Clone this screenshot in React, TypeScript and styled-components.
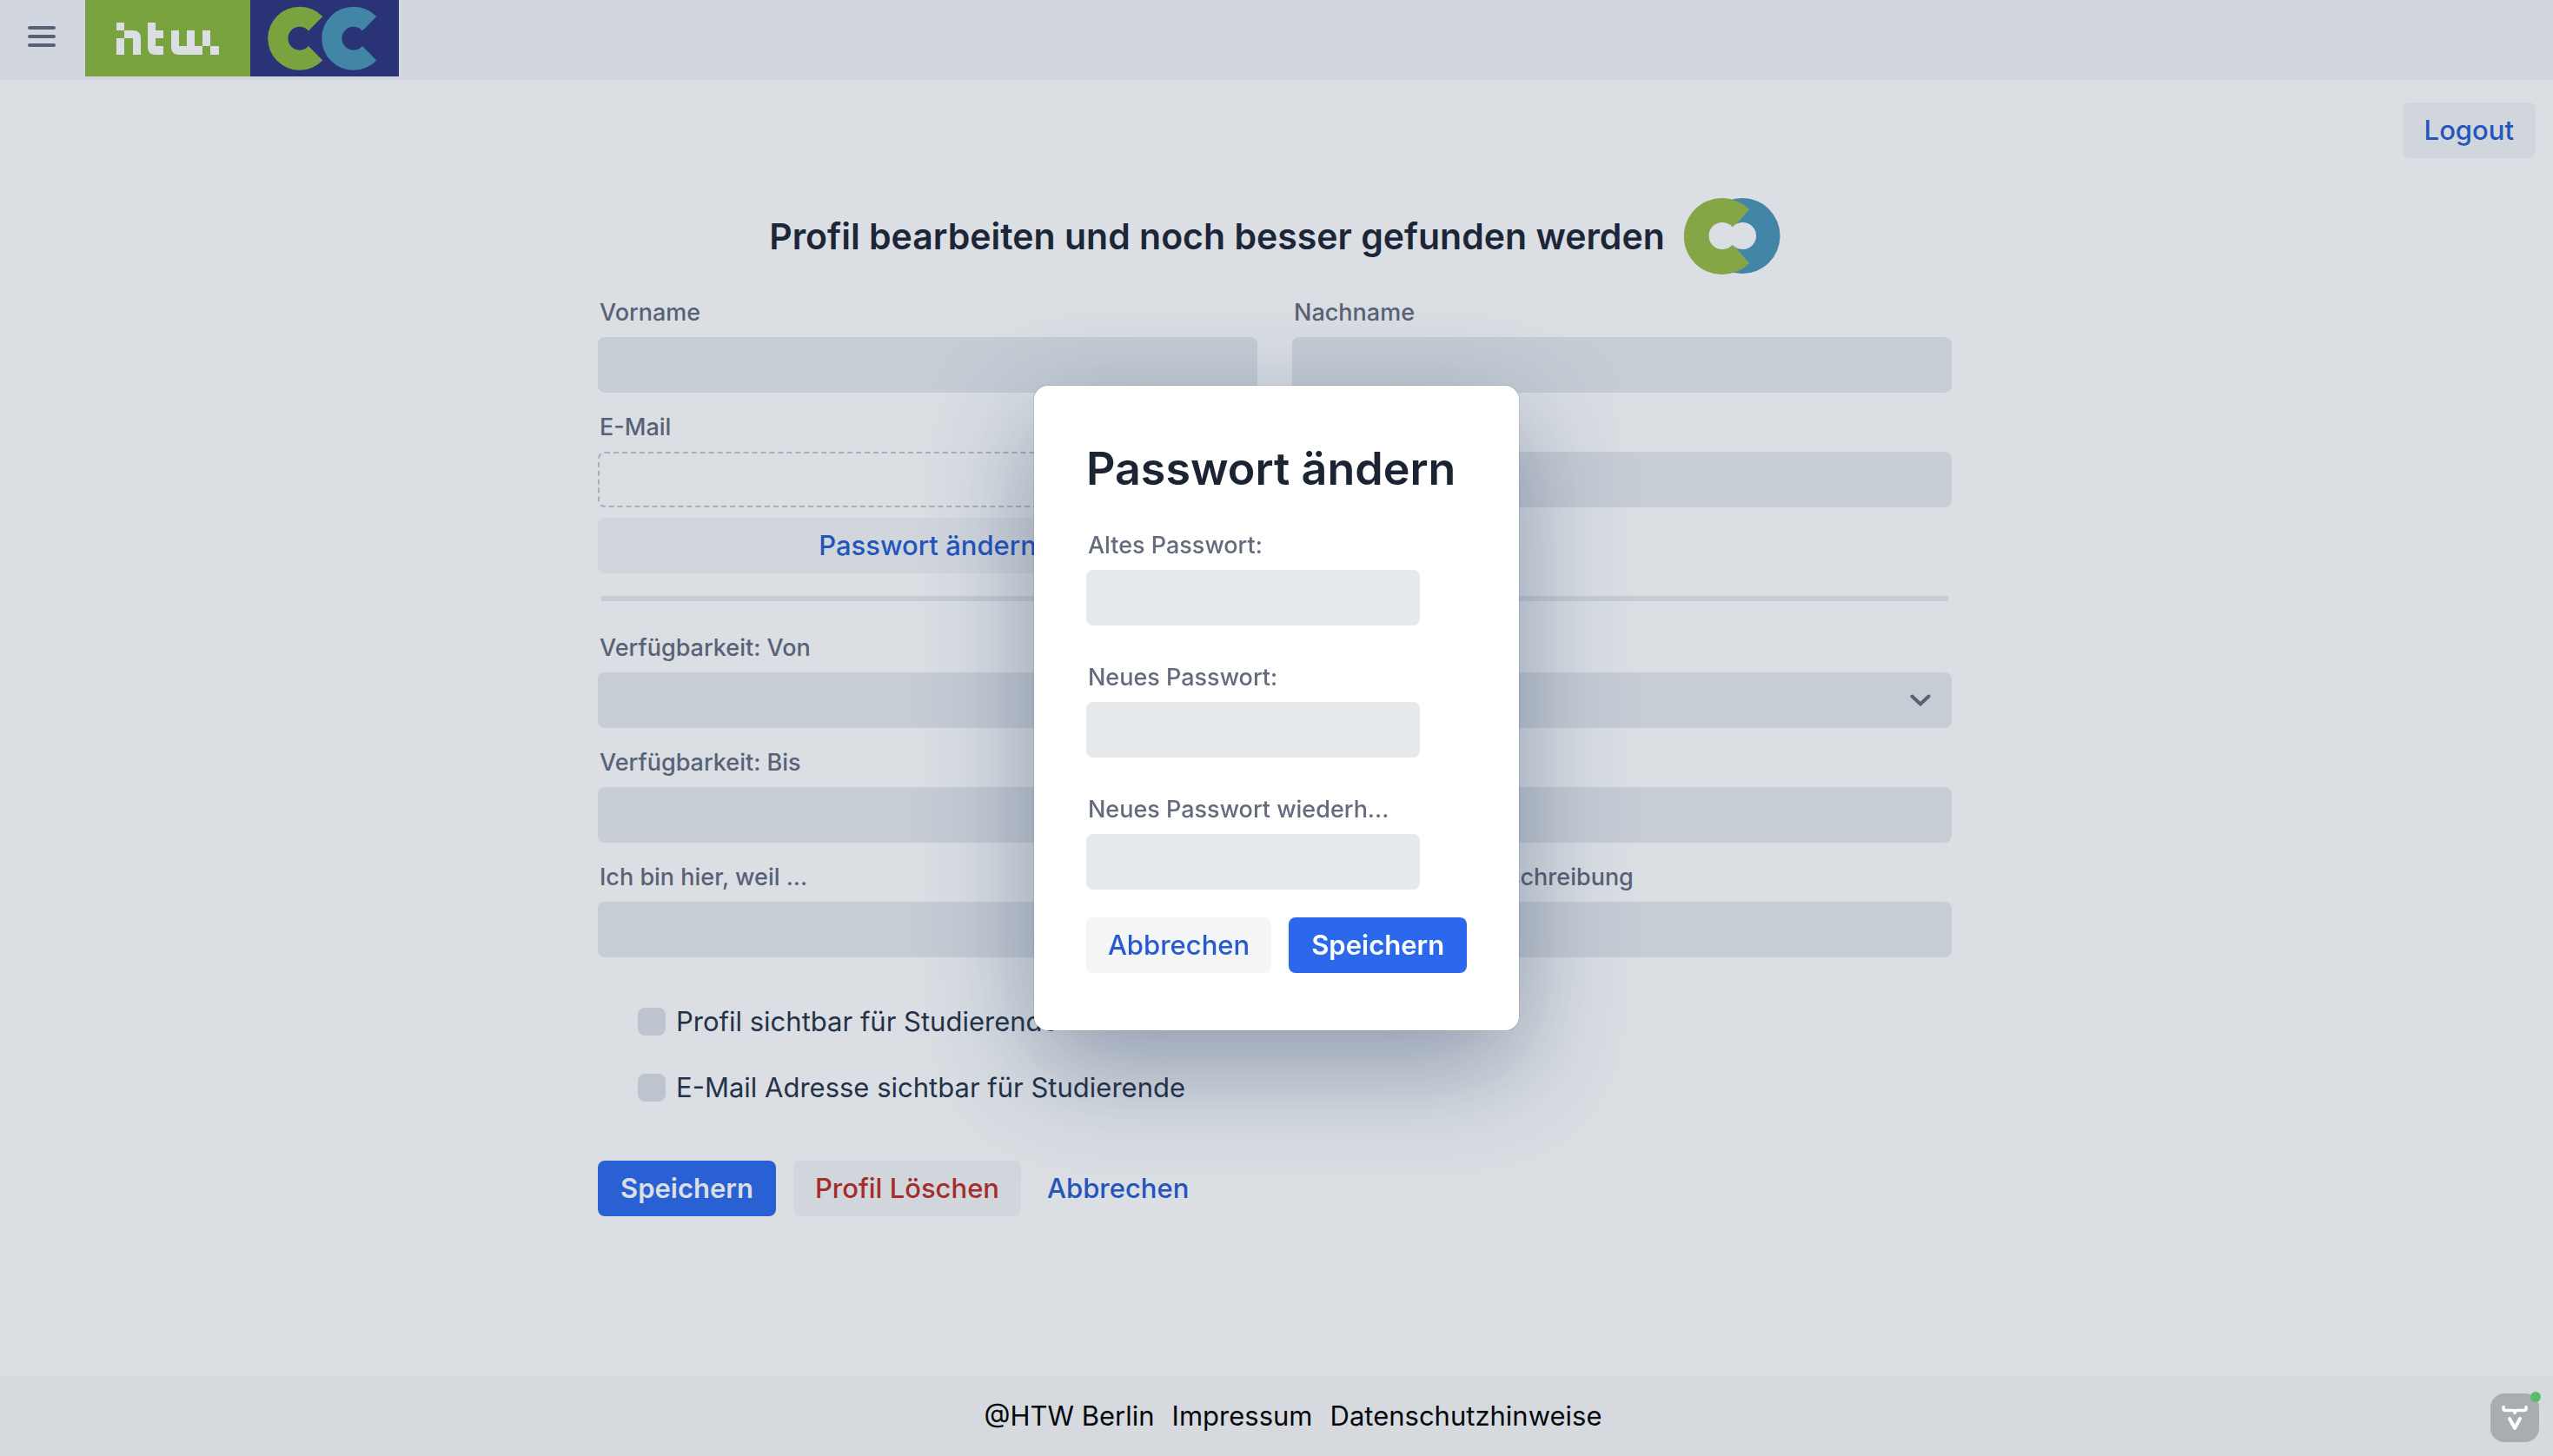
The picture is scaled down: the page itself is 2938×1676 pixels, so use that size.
import React, { useId } from "react";
import styled, { createGlobalStyle, css } from "styled-components";

const color = {
  header: "#1b2433",
  body: "#263246",
  secondary: "#646b7c",
  primary: "#2c68ec",
  primaryText: "#265bd0",
  errorText: "#bf2b1f",
  contrast5: "#f4f5f7",
  contrast10: "#e6eaed",
  green: "#8ab83a",
  lime: "#98bb44",
  teal: "#4b94b7",
  navy: "#2b337d",
};

const GlobalStyle = createGlobalStyle`
  *, *::before, *::after { box-sizing: border-box; }
  body {
    margin: 0;
    background: #fff;
    color: ${color.body};
    font-family: Inter, Roboto, "Liberation Sans", sans-serif;
    font-size: 31px;
    line-height: 48px;
  }
  h1, h2 { margin: 0; color: ${color.header}; font-weight: 600; white-space: nowrap; }
  button, input, select { font: inherit; }
`;

const Page = styled.div`
  min-height: 100vh;
  display: flex;
  flex-direction: column;
`;

const Navbar = styled.header`
  display: flex;
  align-items: flex-start;
  height: 92px;
  background: #f5f6f9;
`;

const MenuToggle = styled.button`
  display: flex;
  align-items: center;
  justify-content: center;
  width: 98px;
  height: 84px;
  padding: 0 2px 0 0;
  border: 0;
  background: none;
  color: ${color.secondary};
`;

const Main = styled.main`
  flex: 1;
  display: flex;
  flex-direction: column;
  padding: 26px 20px 0 16px;
`;

const Button = styled.button<{ $kind?: "plain" | "primary" | "danger" | "link" }>`
  height: 64px;
  padding: 0 25px;
  border: 0;
  border-radius: 8px;
  font-weight: 500;
  white-space: nowrap;
  background: ${color.contrast5};
  color: ${color.primaryText};
  ${({ $kind }) =>
    $kind === "primary" &&
    css`
      padding: 0 26px;
      background: ${color.primary};
      color: #fff;
      font-weight: 600;
    `}
  ${({ $kind }) => $kind === "danger" && css`color: ${color.errorText};`}
  ${({ $kind }) =>
    $kind === "link" &&
    css`
      background: none;
      padding: 0 10px;
    `}
`;

const LogoutButton = styled(Button)`
  align-self: flex-end;
`;

const TitleRow = styled.div`
  display: flex;
  align-items: center;
  justify-content: center;
  gap: 22px;
  margin: 46px 0 4px;
`;

const PageTitle = styled.h1`
  font-size: 41px;
  line-height: 56px;
`;

const ProfileForm = styled.form`
  width: 100%;
  max-width: 1558px;
  margin: 0 auto;
`;

const Columns = styled.div`
  display: grid;
  grid-template-columns: 1fr 1fr;
  column-gap: 40px;
`;

const FieldBox = styled.div`
  display: flex;
  flex-direction: column;
  min-width: 0;
`;

const FieldLabel = styled.label`
  height: 68px;
  padding: 24px 26px 12px 2px;
  overflow: hidden;
  text-overflow: ellipsis;
  white-space: nowrap;
  color: ${color.secondary};
  font-size: 27px;
  line-height: 32px;
  font-weight: 500;
`;

const controlStyle = css`
  width: 100%;
  height: 64px;
  padding: 0 16px;
  border: 0;
  border-radius: 8px;
  background: ${color.contrast10};
  color: ${color.body};
`;

const TextInput = styled.input`
  ${controlStyle}
  &:read-only {
    border: 2px dashed #c2c7cf;
    background: none;
  }
`;

const SelectWrap = styled.div`
  display: grid;
  align-items: center;
  & > * { grid-area: 1 / 1; }
  & > svg { justify-self: end; margin-right: 24px; color: ${color.secondary}; pointer-events: none; }
`;

const SelectInput = styled.select`
  ${controlStyle}
  appearance: none;
`;

const PasswordButton = styled(Button)`
  width: 100%;
  margin-top: 12px;
`;

const Divider = styled.hr`
  height: 6px;
  margin: 26px 4px 14px;
  border: 0;
  background: ${color.contrast10};
`;

const CheckList = styled.div`
  display: flex;
  flex-direction: column;
  gap: 28px;
  padding: 50px 46px 60px;
`;

const CheckLabel = styled.label`
  display: flex;
  align-items: center;
  gap: 12px;
`;

const Checkbox = styled.input`
  appearance: none;
  width: 32px;
  height: 32px;
  margin: 0;
  border-radius: 8px;
  background: #dddfe4;
  &:checked { background: ${color.primary}; }
`;

const Actions = styled.div`
  display: flex;
  gap: 20px;
`;

const Footer = styled.footer`
  display: flex;
  align-items: center;
  justify-content: center;
  gap: 20px;
  height: 92px;
  padding-left: 38px;
  background: #fafafa;
  color: #000;
  a { color: inherit; text-decoration: none; }
`;

const Backdrop = styled.div`
  position: fixed;
  inset: 0;
  display: flex;
  align-items: center;
  justify-content: center;
  padding-bottom: 46px;
  background: rgba(28, 53, 90, 0.16);
`;

const Dialog = styled.section`
  padding: 60px 60px 66px;
  border-radius: 16px;
  background: #fff;
  box-shadow:
    0 0 0 1px rgba(28, 53, 90, 0.1),
    0 40px 128px rgba(28, 53, 90, 0.42);
`;

const DialogTitle = styled.h2`
  margin-bottom: 12px;
  font-size: 52px;
  line-height: 72px;
`;

const DialogFields = styled.div`
  display: grid;
  grid-template-columns: 384px;
  row-gap: 20px;
  margin-bottom: 32px;
`;

const DevBadge = styled.button`
  position: fixed;
  right: 16px;
  bottom: 16px;
  width: 56px;
  height: 56px;
  padding: 0;
  border: 0;
  border-radius: 16px;
  background: #a9acb1;
`;

const StatusDot = styled.span`
  position: absolute;
  top: -2px;
  right: -2px;
  width: 12px;
  height: 12px;
  border-radius: 50%;
  background: #59be68;
`;

type FieldProps = { label: string; type?: string; readOnly?: boolean };

function Field({ label, type = "text", readOnly }: FieldProps) {
  const id = useId();
  return (
    <FieldBox>
      <FieldLabel htmlFor={id}>{label}</FieldLabel>
      <TextInput id={id} type={type} readOnly={readOnly} />
    </FieldBox>
  );
}

function SelectField({ label }: { label: string }) {
  const id = useId();
  return (
    <FieldBox>
      <FieldLabel htmlFor={id}>{label}</FieldLabel>
      <SelectWrap>
        <SelectInput id={id} defaultValue="">
          <option value="" />
        </SelectInput>
        <svg width="24" height="14" viewBox="0 0 24 14" fill="none" aria-hidden="true">
          <path d="M2.500 2.500L12 11.500L21.500 2.500" stroke="currentColor" strokeWidth="4" strokeLinecap="round" />
        </svg>
      </SelectWrap>
    </FieldBox>
  );
}

function Logo() {
  return (
    <svg width="361" height="88" viewBox="0 0 361 88" role="img" aria-label="htw CC">
      <path fill={color.green} d="M0 0h190v88H0z" />
      <path fill={color.navy} d="M190 0h171v88H190z" />
      <g fill="#fff">
        <path d="M36 26h9v9h-9z" />
        <path d="M36 44h9v19h-9z" />
        <path d="M45 35h10q9 0 9 9v19h-9V44H45z" />
        <path d="M72 26h9v9h9v9h-9v9h9v10h-9q-9 0-9-9z" />
        <path d="M99 35h9v18h9V35h9v18h9V35h9v18h-9v10h-27q-9 0-9-9z" />
        <path d="M144 53h10v10h-10z" />
      </g>
      <path
        fill={color.green}
        d="M273.300 19A36.600 36.600 0 1 0 273.300 69.500L257 53A13.400 13.400 0 1 1 257 35.500z"
      />
      <path
        fill={color.teal}
        d="M335.300 19A36.600 36.600 0 1 0 335.300 69.500L319 53A13.400 13.400 0 1 1 319 35.500z"
      />
    </svg>
  );
}

function LinkedRings() {
  return (
    <svg width="111" height="88" viewBox="0 0 111 88" aria-hidden="true">
      <circle cx="67" cy="43.500" r="43.500" fill={color.teal} />
      <path fill={color.lime} d="M75 13A44 44 0 1 0 75 75L56 53V35z" />
      <circle cx="44" cy="43.500" r="15.500" fill="#fff" />
      <circle cx="67.500" cy="43.500" r="15.500" fill="#fff" />
    </svg>
  );
}

export default function App() {
  return (
    <>
      <GlobalStyle />
      <Page>
        <Navbar>
          <MenuToggle aria-label="Menu">
            <svg width="32" height="24" viewBox="0 0 32 24" aria-hidden="true">
              <path
                d="M2 2h28M2 12h28M2 22h28"
                stroke="currentColor"
                strokeWidth="4"
                strokeLinecap="round"
              />
            </svg>
          </MenuToggle>
          <Logo />
        </Navbar>

        <Main>
          <LogoutButton type="button">Logout</LogoutButton>
          <TitleRow>
            <PageTitle>Profil bearbeiten und noch besser gefunden werden</PageTitle>
            <LinkedRings />
          </TitleRow>

          <ProfileForm onSubmit={(e) => e.preventDefault()}>
            <Columns>
              <Field label="Vorname" />
              <Field label="Nachname" />
              <div>
                <Field label="E-Mail" type="email" readOnly />
                <PasswordButton type="button">Passwort ändern</PasswordButton>
              </div>
              <Field label="Telefon" />
            </Columns>
            <Divider />
            <Columns>
              <Field label="Verfügbarkeit: Von" />
              <SelectField label="Studiengang" />
              <Field label="Verfügbarkeit: Bis" />
              <Field label="Fähigkeiten" />
              <Field label="Ich bin hier, weil ..." />
              <Field label="Detaillierte Profilbeschreibung" />
            </Columns>
            <CheckList>
              <CheckLabel>
                <Checkbox type="checkbox" />
                Profil sichtbar für Studierende
              </CheckLabel>
              <CheckLabel>
                <Checkbox type="checkbox" />
                E-Mail Adresse sichtbar für Studierende
              </CheckLabel>
            </CheckList>
            <Actions>
              <Button $kind="primary" type="submit">Speichern</Button>
              <Button $kind="danger" type="button">Profil Löschen</Button>
              <Button $kind="link" type="button">Abbrechen</Button>
            </Actions>
          </ProfileForm>
        </Main>

        <Footer>
          <span>@HTW Berlin</span>
          <a href="#impressum">Impressum</a>
          <a href="#datenschutz">Datenschutzhinweise</a>
        </Footer>
      </Page>

      <Backdrop>
        <Dialog role="dialog" aria-modal="true" aria-labelledby="password-title">
          <DialogTitle id="password-title">Passwort ändern</DialogTitle>
          <DialogFields>
            <Field label="Altes Passwort:" type="password" />
            <Field label="Neues Passwort:" type="password" />
            <Field label="Neues Passwort wiederh..." type="password" />
          </DialogFields>
          <Actions>
            <Button type="button">Abbrechen</Button>
            <Button $kind="primary" type="button">Speichern</Button>
          </Actions>
        </Dialog>
      </Backdrop>

      <DevBadge aria-label="Vaadin">
        <svg width="56" height="56" viewBox="0 0 56 56" fill="none" aria-hidden="true">
          <g stroke="#fff" strokeLinecap="round" strokeLinejoin="round">
            <path d="M15 15.500v2q0 2 2 2h8q3 0 3 3q0-3 3-3h8q2 0 2-2v-2" strokeWidth="3.500" />
            <path d="M22 29l6 11 6-11" strokeWidth="4" />
          </g>
        </svg>
        <StatusDot />
      </DevBadge>
    </>
  );
}
